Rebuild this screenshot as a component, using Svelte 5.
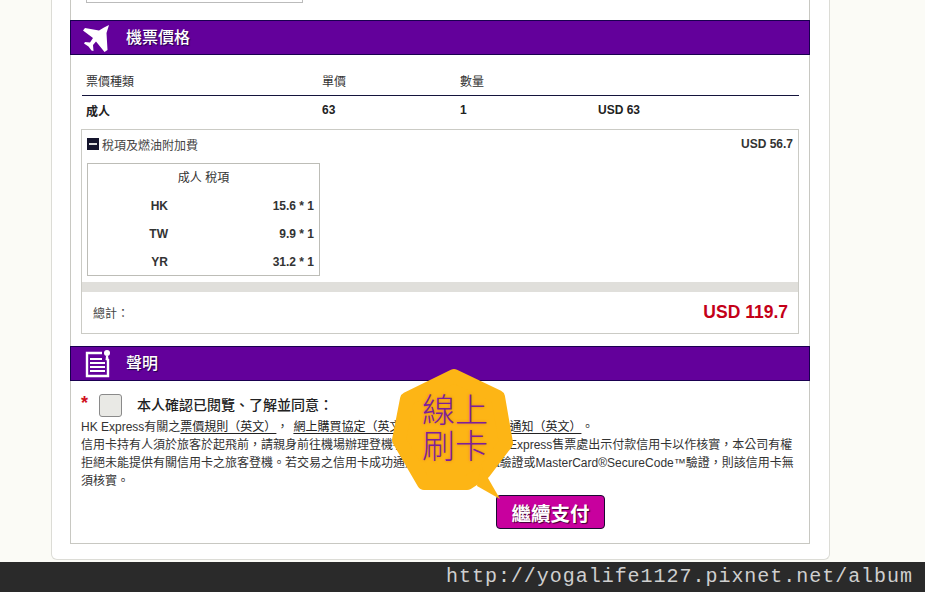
<script>
  const taxes = [
    { code: "HK", amount: "15.6 * 1" },
    { code: "TW", amount: "9.9 * 1" },
    { code: "YR", amount: "31.2 * 1" },
  ];
</script>

<div class="page">
  <div class="card">
    <div class="frame">
      <div class="stub"></div>

      <div class="section-head">
        <svg class="icon" width="30" height="30" viewBox="0 0 30 30">
          <path
            fill="#fff"
            d="M27 2 L24.5 10 L25.5 27 L22.5 29 L14 18.5 L11 22 L11.5 28 L9.5 27.5 L6.5 23.5 L2 20.5 L3 19 L8 19.5 L11 15 L1 7.5 L3 5 L17 7.5 L22 4.5 Z"
          />
        </svg>
        <span class="head-title">機票價格</span>
      </div>

      <div class="fare-table">
        <div class="fare-row head">
          <span>票價種類</span><span>單價</span><span>數量</span><span></span>
        </div>
        <div class="fare-row strong">
          <span>成人</span><span>63</span><span>1</span><span>USD 63</span>
        </div>
      </div>

      <div class="tax-box">
        <div class="tax-top">
          <span class="tax-label"><span class="minus"></span>稅項及燃油附加費</span>
          <span class="tax-sum">USD 56.7</span>
        </div>
        <div class="tax-table">
          <div class="tax-title">成人 稅項</div>
          {#each taxes as t}
            <div class="tax-row">
              <span class="code">{t.code}</span><span class="amount">{t.amount}</span>
            </div>
          {/each}
        </div>
        <div class="gray-bar"></div>
        <div class="total">
          <span>總計：</span>
          <span class="total-num">USD 119.7</span>
        </div>
      </div>

      <div class="section-head second">
        <svg class="icon" width="30" height="30" viewBox="0 0 30 30">
          <path
            fill="none"
            stroke="#fff"
            stroke-width="2.4"
            d="M20 4 H5 V27 H26 V10"
          />
          <path
            fill="none"
            stroke="#fff"
            stroke-width="2.2"
            d="M8 10 H20 M8 14 H23 M8 18 H23 M8 22 H23"
          />
          <circle cx="25" cy="4" r="3" fill="#fff" />
          <path fill="#fff" d="M24 7 L26 7 L27 12 L23.5 11 Z" />
        </svg>
        <span class="head-title">聲明</span>
      </div>

      <div class="declare">
        <div class="confirm">
          <span class="star">*</span>
          <span class="check"></span>
          <span class="confirm-text">本人確認已閱覽、了解並同意：</span>
        </div>
        <p class="terms">
          HK Express有關之<u>票價規則（英文）</u>，<u class="second-link">網上購買協定（英文）</u>及<u>旅客私隱政策之通知（英文）</u>。<br />
          信用卡持有人須於旅客於起飛前，請親身前往機場辦理登機手續時，親自向本HK Express售票處出示付款信用卡以作核實，本公司有權<br />
          拒絕未能提供有關信用卡之旅客登機。若交易之信用卡成功通過Verified by Visa驗證或MasterCard®SecureCode™驗證，則該信用卡無<br />
          須核實。
        </p>
        <div class="pay-row">
          <button class="pay">繼續支付</button>
        </div>
      </div>
    </div>
  </div>

  <div class="watermark">http://yogalife1127.pixnet.net/album</div>

  <div class="bubble">
    <svg width="140" height="140" viewBox="0 0 140 140">
      <path
        fill="#fdb515"
        stroke="#fdb515"
        stroke-width="14"
        stroke-linejoin="round"
        d="M65 10 L109 31 L117 77 L95 106 L78 117 L35 117 L10 74 L18 33 Z"
      />
      <path fill="#fdb515" d="M92 100 L111 133 L88 120 Z" />
    </svg>
    <div class="bubble-text">線上<br />刷卡</div>
  </div>
</div>

<style>
  :global(body) {
    background: #fbfbf6;
  }
  .page {
    position: relative;
    width: 925px;
    height: 592px;
    overflow: hidden;
    display: flex;
    flex-direction: column;
    font-family: "Liberation Sans", "Noto Sans CJK TC", sans-serif;
    font-size: 12px;
    color: #222;
    text-spacing-trim: space-all;
  }
  .card {
    box-sizing: border-box;
    width: 779px;
    height: 560px;
    margin-left: 51px;
    padding: 0 19px 15px 18px;
    background: #fff;
    border: 1px solid #dcdcd6;
    border-top: none;
    border-radius: 0 0 6px 6px;
  }
  .frame {
    box-sizing: border-box;
    height: 100%;
    border: 1px solid #c8c8c2;
    border-top: none;
  }
  .stub {
    box-sizing: border-box;
    width: 217px;
    height: 3px;
    margin-left: 15px;
    border: 1px solid #bbb;
    border-top: none;
  }
  .section-head {
    box-sizing: border-box;
    display: flex;
    align-items: center;
    height: 35px;
    margin: 17px -1px 0 -1px;
    padding-left: 11px;
    background: #63009b;
    border: 1px solid #1a0050;
  }
  .section-head.second {
    margin-top: 12px;
  }
  .icon {
    flex: none;
  }
  .head-title {
    margin: -3px 0 0 14px;
    color: #fff;
    font-size: 16px;
    font-weight: 500;
    text-shadow: 1px 1px 1px #20004a;
  }
  .fare-table {
    margin: 11px 10px 0 11px;
  }
  .fare-row {
    display: grid;
    grid-template-columns: 236px 138px 138px 1fr;
    align-items: center;
    padding-left: 4px;
    font-size: 12px;
  }
  .fare-row.head {
    height: 29px;
    color: #333;
    border-bottom: 1px solid #14143c;
  }
  .fare-row.strong {
    height: 28px;
    font-weight: 700;
    font-size: 12px;
  }
  .tax-box {
    box-sizing: border-box;
    height: 205px;
    margin: 5px 10px 0 10px;
    border: 1px solid #cbcbc5;
  }
  .tax-top {
    display: flex;
    justify-content: space-between;
    align-items: center;
    height: 28px;
    padding: 0 5px;
  }
  .tax-label {
    display: flex;
    align-items: center;
    color: #444;
  }
  .minus {
    position: relative;
    width: 12px;
    height: 12px;
    margin-right: 3px;
    background: #14142c;
  }
  .minus::after {
    content: "";
    position: absolute;
    left: 2px;
    right: 2px;
    top: 5px;
    height: 2px;
    background: #ddd;
  }
  .tax-sum {
    font-weight: 700;
    color: #333;
  }
  .tax-table {
    box-sizing: border-box;
    width: 233px;
    height: 113px;
    margin: 5px 0 0 5px;
    border: 1px solid #bdbdb7;
    color: #333;
  }
  .tax-title {
    height: 28px;
    line-height: 28px;
    text-align: center;
  }
  .tax-row {
    display: grid;
    grid-template-columns: 80px 146px;
    align-items: center;
    height: 28px;
    font-weight: 700;
  }
  .code {
    text-align: right;
  }
  .amount {
    text-align: right;
  }
  .gray-bar {
    height: 10px;
    margin-top: 6px;
    background: #e0dfdb;
  }
  .total {
    display: flex;
    justify-content: space-between;
    align-items: center;
    height: 40px;
    padding: 0 10px 0 11px;
    color: #444;
  }
  .total-num {
    color: #c40018;
    font-size: 17.5px;
    font-weight: 700;
  }
  .declare {
    padding: 10px 10px 0 10px;
  }
  .confirm {
    display: flex;
    align-items: center;
    height: 28px;
  }
  .star {
    width: 18px;
    margin-top: -4px;
    color: #d01020;
    font-size: 18px;
    font-weight: 700;
  }
  .check {
    box-sizing: border-box;
    width: 23px;
    height: 23px;
    background: #e9e9e5;
    border: 1px solid #8a8a8a;
    border-radius: 3px;
  }
  .confirm-text {
    margin: -2px 0 0 15px;
    font-size: 14px;
    font-weight: 500;
  }
  .terms {
    margin: -1px 0 0;
    font-size: 12px;
    line-height: 18px;
    white-space: nowrap;
    color: #333;
  }
  .terms u {
    color: #222;
    text-underline-offset: 2px;
  }
  .second-link {
    margin-left: 5px;
  }
  .pay-row {
    margin: 5px 0 0 415px;
  }
  .pay {
    box-sizing: border-box;
    width: 109px;
    height: 34px;
    padding: 0;
    color: #fff;
    font-family: inherit;
    font-size: 19.5px;
    font-weight: 700;
    text-shadow: 1px 1px 1px #3a0030;
    background: #c8009e;
    border: 1px solid #1a0a30;
    border-radius: 4px;
  }
  .watermark {
    box-sizing: border-box;
    height: 30px;
    margin-top: 2px;
    padding-right: 12px;
    color: #cfcfcf;
    background: #2a2a2a;
    font-family: "Liberation Mono", monospace;
    font-size: 20px;
    letter-spacing: 0.97px;
    line-height: 30px;
    text-align: right;
  }
  .bubble {
    position: absolute;
    left: 389px;
    top: 366px;
    width: 140px;
    height: 140px;
  }
  .bubble-text {
    position: absolute;
    left: 33px;
    top: 27px;
    color: #7d1f9a;
    font-size: 33px;
    line-height: 36px;
    font-weight: 300;
    text-shadow: 0 0 3px #e07a20;
    white-space: nowrap;
  }
</style>
